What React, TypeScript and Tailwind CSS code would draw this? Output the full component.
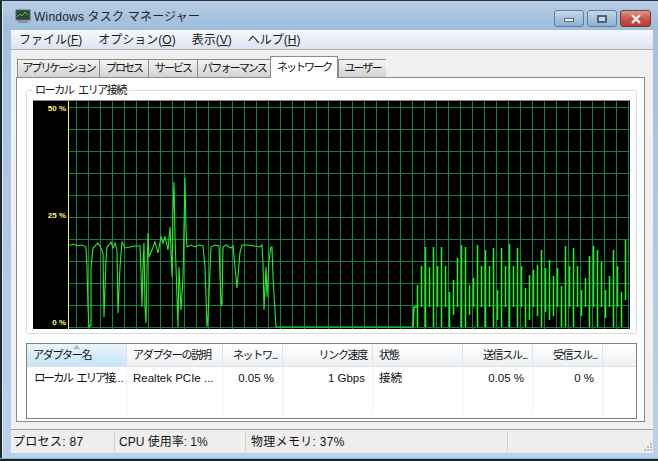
import React from "react";

const font = { fontFamily: '"Liberation Sans","Noto Sans CJK JP",sans-serif' };

const leftPts: [number, number][] = [
  [69,245],[71,245],[74,244],[77,246],[82,245],[86,247],[87,268],[88,307],[89,327],[91,325],[91,268],[93,248],[96,245],[98,243],[101,248],[103,253],[104,317],[106,260],[107,247],[109,245],[111,242],[113,248],[115,243],[117,250],[118,313],[120,267],[122,242],[125,248],[130,247],[135,246],[140,246],[141,270],[142,307],[143,267],[144,243],[145,307],[146,323],[147,270],[148,233],[149,257],[152,250],[155,242],[158,253],[161,237],[163,243],[165,237],[168,250],[170,227],[172,277],[173,210],[174,182],[175,237],[177,297],[178,327],[179,267],[181,310],[183,277],[185,178],[186,230],[187,247],[191,245],[195,247],[199,245],[203,246],[205,267],[207,327],[208,317],[211,247],[215,245],[219,246],[221,303],[222,306],[223,247],[226,245],[229,247],[231,248],[233,246],[236,277],[237,288],[240,252],[242,245],[248,245],[254,246],[260,247],[262,245],[263,263],[264,310],[266,267],[267,297],[269,260],[271,247],[272,247],[273,277],[276,327],[413,327],
];

// one [peak, bottom] pair for each 4px cycle of the burst section, from x=417
const cycles: [number, number][] = [
  [285,327],[266,307],[247,327],[267,307],[247,327],[266,307],[247,327],[266,307],[292,327],
  [280,315],[258,307],[245,327],[247,327],[285,315],[278,307],
  [245,327],[266,307],[250,327],[266,307],[248,327],[290,320],
  [248,327],[266,307],[244,327],[266,307],[248,327],[266,307],[288,327],
  [275,320],[270,307],[265,316],[250,327],[268,312],[260,320],[276,316],[268,307],[286,327],
  [246,327],[266,307],[248,327],[266,307],[290,316],[278,307],
  [256,327],[246,307],[250,327],[262,307],[290,318],[276,307],[250,327],[266,307],[292,327],[240,300],
];

function rightPath() {
  let d = "M413 327L414 307L417 307";
  let x = 417;
  cycles.forEach(([peak, bottom]) => {
    d += `M${x + 0.5} ${bottom}L${x + 0.5} ${peak}`;
    x += 4;
  });
  return d;
}

function Graph() {
  const vs: number[] = [];
  for (let x = 76; x <= 628; x += 12) vs.push(x);
  const hs: number[] = [];
  for (let y = 107; y <= 327; y += 22) hs.push(y);
  return (
    <svg width="597" height="229" viewBox="33 100 597 229" className="block">
      <rect x="33" y="100" width="597" height="229" fill="#000" />
      <rect x="33" y="100" width="597" height="1" fill="#8c8c8c" />
      <g stroke="#0f8048" strokeWidth="1" shapeRendering="crispEdges">
        {vs.map((x) => <line key={x} x1={x + 0.5} y1="101" x2={x + 0.5} y2="329" />)}
        {hs.map((y) => <line key={y} x1="69" y1={y + 0.5} x2="630" y2={y + 0.5} />)}
      </g>
      <line x1="68.5" y1="101" x2="68.5" y2="329" stroke="#ffff33" strokeWidth="1" />
      <path d={leftPts.map((p, i) => `${i ? "L" : "M"}${p[0]} ${p[1]}`).join("")} fill="none" stroke="#22f022" strokeWidth="1.1" />
      <path d={rightPath()} fill="none" stroke="#22f022" strokeWidth="1.6" />
      <g fill="#ffff66" fontSize="8" fontFamily='"Liberation Sans",sans-serif' fontWeight="700" textAnchor="end">
        <text x="66" y="111">50 %</text>
        <text x="66" y="218">25 %</text>
        <text x="66" y="325">0 %</text>
      </g>
    </svg>
  );
}

const tabs: { t: string; c: string; active?: boolean }[] = [
  { t: "アプリケーション", c: "w-[82px]" },
  { t: "プロセス", c: "w-[49px]" },
  { t: "サービス", c: "w-[49px]" },
  { t: "パフォーマンス", c: "w-[73px]" },
  { t: "ネットワーク", c: "w-[68px]", active: true },
  { t: "ユーザー", c: "w-[48px] border-r" },
];

const cols: { t: string; c: React.ReactNode; w: string; r: boolean; sel?: boolean; cell: string }[] = [
  { t: "アダプター名", c: <>ローカル エリア接<span className="tracking-normal">...</span></>, w: "w-[100px]", r: false, sel: true, cell: "pl-[7px] tracking-[-2px] [word-spacing:3px]" },
  { t: "アダプターの説明", c: "Realtek PCIe ...", w: "w-[96px]", r: false, cell: "pl-[6px]" },
  { t: "ネットワ...", c: "0.05 %", w: "w-[60px]", r: true, cell: "pr-[8px] text-right" },
  { t: "リンク速度", c: "1 Gbps", w: "w-[90px]", r: true, cell: "pr-[7px] text-right" },
  { t: "状態", c: "接続", w: "w-[90px]", r: false, cell: "pl-[6px]" },
  { t: "送信スル...", c: "0.05 %", w: "w-[70px]", r: true, cell: "pr-[8px] text-right" },
  { t: "受信スル...", c: "0 %", w: "w-[70px]", r: true, cell: "pr-[8px] text-right" },
];

export default function App() {
  return (
    <div style={font} className="w-[658px] h-[461px] overflow-hidden flex flex-col bg-[#b9d1ea] text-[12px] text-[#111] leading-none">
      <div className="h-[1px] bg-[#2a3540] shrink-0" />
      <div className="flex-1 flex min-h-0">
        <div className="w-[2px] bg-[#1c2a30]" />
        <div className="w-[1px] bg-[#dce8f2]" />
        <div className="flex-1 flex flex-col min-w-0 bg-gradient-to-b from-[#a4c0dd] to-[#b9d1ea]">
          {/* title */}
          <div className="h-[29px] flex items-center relative bg-gradient-to-b from-[#b8cde3] to-[#9dbcdc] shrink-0">
            <svg width="18" height="16" viewBox="0 0 18 16" className="ml-[10px] mt-[2px]">
              <rect x="0" y="9" width="2" height="5" fill="#b8c4cc" />
              <rect x="3" y="1" width="14" height="10" fill="#28473a" stroke="#5f6b70" />
              <path d="M4 8l3-3 2 2 3-4 3 3" stroke="#3fd050" fill="none" />
              <rect x="5" y="12" width="10" height="2" fill="#8c969c" />
            </svg>
            <span className="ml-[3px] mt-[3px] text-[12px] tracking-[0.2px] text-[#1a2430] whitespace-nowrap">Windows タスク マネージャー</span>
            <div className="absolute right-[7px] top-[9px] flex gap-[3px]">
              <div className="w-[30px] h-[17px] rounded-[3px] border border-[#5d7c9e] bg-gradient-to-b from-[#c6d8ea] via-[#a9c2dc] to-[#8fb0d0] flex items-center justify-center">
                <div className="w-[10px] h-[4px] mt-[3px] bg-[#e8eef4] border border-[#5a6f85]" />
              </div>
              <div className="w-[30px] h-[17px] rounded-[3px] border border-[#5d7c9e] bg-gradient-to-b from-[#c6d8ea] via-[#a9c2dc] to-[#8fb0d0] flex items-center justify-center">
                <div className="w-[10px] h-[8px] border-[2px] border-[#4f6275] bg-[#c8d6e4]" />
              </div>
              <div className="w-[31px] h-[17px] rounded-[3px] border border-[#6e3c3c] bg-gradient-to-b from-[#dd9a8c] via-[#c8544a] to-[#c03a2e] flex items-center justify-center">
                <svg width="12" height="10" viewBox="0 0 12 10">
                  <path d="M2 1l8 8M10 1L2 9" stroke="#f4f4f4" strokeWidth="2.4" />
                </svg>
              </div>
            </div>
          </div>
          {/* client */}
          <div className="flex-1 min-h-0 mr-[5px] ml-[8px] flex flex-col">
            {/* menu */}
            <div className="h-[20px] flex items-center gap-[16px] pl-[8px] text-[12px] text-[#1a1a1a] bg-gradient-to-b from-[#f6f8fc] to-[#dde3f1] border-b border-[#aab4c0] shrink-0 whitespace-nowrap">
              <span>ファイル(<u>F</u>)</span>
              <span>オプション(<u>O</u>)</span>
              <span>表示(<u>V</u>)</span>
              <span>ヘルプ(<u>H</u>)</span>
            </div>
            {/* tabs + panel */}
            <div className="flex flex-col pl-[5px] pr-[8px] pt-[6px] pb-[7px] bg-[#f0f0f0] shrink-0">
              <div className="flex h-[22px] items-end relative z-10 mb-[-1px] ml-[1px]">
                {tabs.map((tab) =>
                  tab.active ? (
                    <div key={tab.t} className={`${tab.c} h-[22px] border border-b-0 border-[#8b8b8b] bg-white flex items-center justify-center text-[11px] tracking-[-2px] whitespace-nowrap`}>{tab.t}</div>
                  ) : (
                    <div key={tab.t} className={`${tab.c} h-[18px] mb-[1px] border border-b-0 border-r-0 border-[#8b8b8b] bg-gradient-to-b from-[#f4f4f4] to-[#d2d2d2] flex items-center justify-center text-[11px] tracking-[-1.9px] whitespace-nowrap`}>{tab.t}</div>
                  )
                )}
              </div>
              <div className="h-[345px] border border-[#8b8b8b] bg-white pt-[12px] pl-[9px] pr-[7px] flex flex-col shrink-0">
                <div className="relative h-[244px] border border-[#dcdcdc] rounded-[2px] pl-[6px] pt-[9px] shrink-0">
                  <span className="absolute left-[5px] top-[-6px] bg-white px-[3px] text-[11px] tracking-[-1.4px] [word-spacing:3px] whitespace-nowrap">ローカル エリア接続</span>
                  <Graph />
                </div>
                <div className="mt-[9px] h-[76px] border border-[#7e7e7e] flex flex-col shrink-0">
                  <div className="h-[23px] flex border-b border-[#d8e2ec] bg-gradient-to-b from-white to-[#eef0f2] shrink-0">
                    {cols.map((c) => (
                      <div key={c.t} className={`${c.w} relative border-r border-[#dde3ea] flex items-center text-[11px] tracking-[-1.3px] whitespace-nowrap pl-[6px] pr-[5px] ${c.r ? "justify-end" : ""} ${c.sel ? "bg-gradient-to-b from-[#e8f5fc] to-[#c6e5f6]" : ""}`}>
                        {c.sel && (
                          <svg width="7" height="4" viewBox="0 0 7 4" className="absolute left-[46px] top-[1px]">
                            <path d="M3.5 0L7 4H0z" fill="#9fb4c4" />
                          </svg>
                        )}
                        {c.t}
                      </div>
                    ))}
                    <div className="flex-1" />
                  </div>
                  <div className="flex-1 flex">
                    {cols.map((c) => (
                      <div key={c.t} className={`${c.w} ${c.cell} border-r border-[#eef1f5] mb-[3px] pt-[6px] text-[11.5px] whitespace-nowrap`}>{c.c}</div>
                    ))}
                  </div>
                </div>
              </div>
            </div>
            {/* status */}
            <div className="h-[24px] border-t border-[#a0a0a0] flex items-center bg-[#f0eeec] text-[12px] shrink-0 whitespace-nowrap relative">
              <div className="w-[104px] h-[20px] flex items-center pl-[2px] tracking-[0.3px] border-r border-[#d4d0cc]">プロセス: 87</div>
              <div className="w-[131px] h-[20px] flex items-center pl-[4px] border-r border-[#d4d0cc]">CPU 使用率: 1%</div>
              <div className="w-[262px] h-[20px] flex items-center pl-[5px] tracking-[0.3px] border-r border-[#d4d0cc]">物理メモリ: 37%</div>
              <svg width="10" height="10" viewBox="0 0 10 10" className="absolute right-0 bottom-[1px]">
                <g fill="#b8b8b8">
                  <rect x="7" y="1" width="2" height="2" /><rect x="4" y="4" width="2" height="2" /><rect x="7" y="4" width="2" height="2" />
                  <rect x="1" y="7" width="2" height="2" /><rect x="4" y="7" width="2" height="2" /><rect x="7" y="7" width="2" height="2" />
                </g>
              </svg>
            </div>
          </div>
        </div>
      </div>
      <div className="h-[1px] bg-[#6ec6e4] shrink-0" />
      <div className="h-[2px] bg-[#1a2226] shrink-0" />
    </div>
  );
}
